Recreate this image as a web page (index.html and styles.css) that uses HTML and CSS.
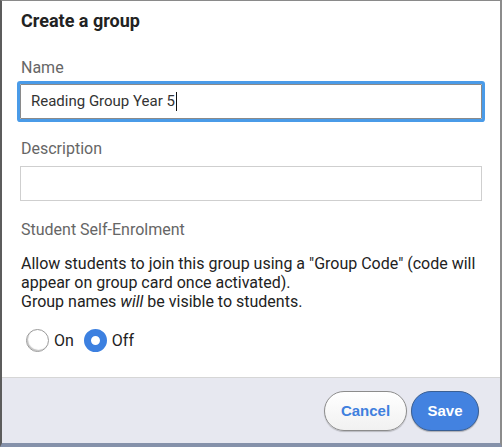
FILE: index.html
```html
<!DOCTYPE html>
<html>
<head>
<meta charset="utf-8">
<link rel="stylesheet" href="styles.css">
</head>
<body>
<div class="dialog">
  <div class="content">
    <h1 class="title">Create a group</h1>
    <label class="label">Name</label>
    <div class="input focused">Reading Group Year 5<span class="caret"></span></div>
    <label class="label">Description</label>
    <div class="input"></div>
    <div class="label section">Student Self-Enrolment</div>
    <p class="info">Allow students to join this group using a "Group Code" (code will appear on group card once activated).<br>Group names <em>will</em> be visible to students.</p>
    <div class="radios">
      <span class="radio"></span><span class="rlabel">On</span>
      <span class="radio checked"></span><span class="rlabel">Off</span>
    </div>
  </div>
  <div class="footer">
    <button class="btn cancel">Cancel</button>
    <button class="btn save">Save</button>
  </div>
</div>
</body>
</html>
```
FILE: styles.css
```css
html, body {
  margin: 0;
  padding: 0;
  background: #ffffff;
}
body {
  font-family: Roboto, "Noto Sans", sans-serif;
}
.dialog {
  width: 502px;
  height: 447px;
  box-sizing: border-box;
  border-left: 2px solid #5c5c5c;
  border-top: 1px solid #8a8a8a;
  border-right: 2px solid #8c8c8c;
  border-bottom: 4px solid #8591aa;
  display: flex;
  flex-direction: column;
  background: #fff;
}
.content {
  flex: 1;
  padding: 8px 18px 0 18px;
}
.title {
  margin: 0 0 25px 1px;
  font-size: 18px;
  line-height: 24px;
  font-weight: 700;
  color: #222;
}
.label {
  display: block;
  font-size: 16px;
  line-height: 20px;
  color: #666;
  margin: 0 0 6px 1px;
}
.input {
  height: 35px;
  box-sizing: border-box;
  border: 1px solid #cfcfcf;
  margin-bottom: 20px;
  font-size: 15px;
  line-height: 33px;
  color: #333;
  padding-left: 10px;
  display: flex;
  align-items: center;
}
.input + .label { margin-bottom: 7px; }
.input.focused {
  border: 1px solid #8a8a8a;
  box-shadow: 0 0 0 3px #4a9be8;
  border-radius: 1px;
}
.caret {
  display: inline-block;
  width: 1px;
  height: 19px;
  background: #111;
  margin-left: 1px;
}
.section {
  margin-top: -1px;
  margin-bottom: 0;
}
.info {
  margin: 14px 0 0 1px;
  font-size: 16px;
  line-height: 19px;
  color: #222;
}
.radios {
  display: flex;
  align-items: center;
  height: 24px;
  margin-top: 17px;
  padding-left: 6px;
}
.radio {
  width: 23px;
  height: 23px;
  box-sizing: border-box;
  border-radius: 50%;
  border: 1px solid #9a9a9a;
  background: #fff;
  box-shadow: inset 1px -1px 1px rgba(0,0,0,0.25);
}
.radio.checked {
  border: 7px solid #3c80e0;
  background: #fff;
  box-shadow: none;
  margin-left: 10px;
}
.rlabel {
  font-size: 16px;
  color: #222;
  margin-left: 5px;
}
.footer {
  height: 66px;
  box-sizing: border-box;
  border-top: 1px solid #d6d6d6;
  background: #e7e8f0;
  display: flex;
  align-items: center;
  justify-content: flex-end;
  gap: 4px;
  padding-right: 21px;
}
.btn {
  height: 40px;
  border-radius: 20px;
  font-family: "Liberation Sans", Arial, sans-serif;
  font-size: 15px;
  font-weight: 700;
  padding: 0;
  cursor: pointer;
}
.cancel {
  width: 83px;
  border: 1px solid #8c8c8c;
  color: #3f80de;
  background: linear-gradient(#ffffff, #f1f1f1);
  box-shadow: 0 1px 1px rgba(0,0,0,0.2);
}
.save {
  width: 68px;
  border: 1px solid #3a5f93;
  color: #fff;
  background: #4382e0;
  box-shadow: 0 1px 1px rgba(0,0,0,0.25);
}
```
